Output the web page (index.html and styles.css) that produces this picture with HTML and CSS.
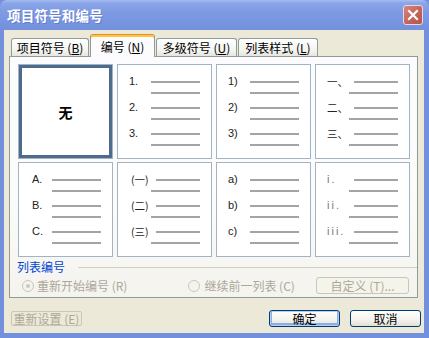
FILE: index.html
```html
<!DOCTYPE html>
<html>
<head>
<meta charset="utf-8">
<link rel="stylesheet" href="styles.css">
</head>
<body>
<div class="window">
  <div class="titlebar">
    <span class="title">项目符号和编号</span>
    <span class="close"><svg width="12" height="12" viewBox="0 0 12 12"><path d="M2 2 L10 10 M10 2 L2 10" stroke="#fff" stroke-width="2.2" stroke-linecap="square" fill="none"/></svg></span>
  </div>
  <div class="client">
    <div class="tabs">
      <div class="tab t1">项目符号 (<u>B</u>)</div>
      <div class="tab active">编号 (<u>N</u>)</div>
      <div class="tab t3">多级符号 (<u>U</u>)</div>
      <div class="tab t4">列表样式 (<u>L</u>)</div>
    </div>
    <div class="panel">
      <div class="grid">
        <div class="cell selected none">无</div>
        <div class="cell">
          <div class="item"><div class="r1"><span class="lbl">1.</span><span class="ln"></span></div><span class="ln"></span></div>
          <div class="item"><div class="r1"><span class="lbl">2.</span><span class="ln"></span></div><span class="ln"></span></div>
          <div class="item"><div class="r1"><span class="lbl">3.</span><span class="ln"></span></div><span class="ln"></span></div>
        </div>
        <div class="cell">
          <div class="item"><div class="r1"><span class="lbl">1)</span><span class="ln"></span></div><span class="ln"></span></div>
          <div class="item"><div class="r1"><span class="lbl">2)</span><span class="ln"></span></div><span class="ln"></span></div>
          <div class="item"><div class="r1"><span class="lbl">3)</span><span class="ln"></span></div><span class="ln"></span></div>
        </div>
        <div class="cell wide">
          <div class="item"><div class="r1"><span class="lbl cjk">一、</span><span class="ln"></span></div><span class="ln"></span></div>
          <div class="item"><div class="r1"><span class="lbl cjk">二、</span><span class="ln"></span></div><span class="ln"></span></div>
          <div class="item"><div class="r1"><span class="lbl cjk">三、</span><span class="ln"></span></div><span class="ln"></span></div>
        </div>
        <div class="cell ind">
          <div class="item"><div class="r1"><span class="lbl">A.</span><span class="ln"></span></div><span class="ln"></span></div>
          <div class="item"><div class="r1"><span class="lbl">B.</span><span class="ln"></span></div><span class="ln"></span></div>
          <div class="item"><div class="r1"><span class="lbl">C.</span><span class="ln"></span></div><span class="ln"></span></div>
        </div>
        <div class="cell wide ind">
          <div class="item"><div class="r1"><span class="lbl cjk">(一)</span><span class="ln"></span></div><span class="ln"></span></div>
          <div class="item"><div class="r1"><span class="lbl cjk">(二)</span><span class="ln"></span></div><span class="ln"></span></div>
          <div class="item"><div class="r1"><span class="lbl cjk">(三)</span><span class="ln"></span></div><span class="ln"></span></div>
        </div>
        <div class="cell">
          <div class="item"><div class="r1"><span class="lbl">a)</span><span class="ln"></span></div><span class="ln"></span></div>
          <div class="item"><div class="r1"><span class="lbl">b)</span><span class="ln"></span></div><span class="ln"></span></div>
          <div class="item"><div class="r1"><span class="lbl">c)</span><span class="ln"></span></div><span class="ln"></span></div>
        </div>
        <div class="cell wide">
          <div class="item"><div class="r1"><span class="lbl roman">i.</span><span class="ln"></span></div><span class="ln"></span></div>
          <div class="item"><div class="r1"><span class="lbl roman">ii.</span><span class="ln"></span></div><span class="ln"></span></div>
          <div class="item"><div class="r1"><span class="lbl roman">iii.</span><span class="ln"></span></div><span class="ln"></span></div>
        </div>
      </div>
      <div class="section">
        <span class="section-label">列表编号</span>
        <span class="sep"></span>
      </div>
      <div class="options">
        <span class="radio checked"></span><span class="dis opt1">重新开始编号 (R)</span>
        <span class="radio r2"></span><span class="dis">继续前一列表 (C)</span>
        <span class="btn dis-btn custom">自定义 (T)...</span>
      </div>
    </div>
    <div class="footer">
      <span class="reset">重新设置 (E)</span>
      <span class="btn default">确定</span>
      <span class="btn cancel">取消</span>
    </div>
  </div>
</div>
</body>
</html>
```

FILE: styles.css
```css
* { box-sizing: border-box; }
html, body { margin: 0; padding: 0; background: #7590de; }
body {
  width: 429px; height: 338px; overflow: hidden;
  font-family: "Noto Sans CJK SC", "Liberation Sans", sans-serif;
  font-size: 12px;
}
.window {
  width: 429px; height: 338px;
  background: #7390dc;
  border-radius: 7px 7px 0 0;
  display: flex; flex-direction: column;
}
.titlebar {
  height: 30px;
  display: flex; align-items: center;
  padding-left: 7px;
  border-radius: 7px 7px 0 0;
  background: linear-gradient(#a7bdf0 0px, #8aa5e8 3px, #7e9ae3 12px, #7592de 26px, #7390dc 30px);
}
.title {
  color: #fff; font-weight: bold; font-size: 13.5px; line-height: 16px;
  letter-spacing: 0.2px;
  text-shadow: 1px 1px 0 rgba(60, 80, 160, 0.35);
}
.close {
  margin-left: auto; margin-right: 6px;
  width: 20px; height: 20px;
  border: 1px solid #e9d8de;
  border-radius: 3px;
  background: linear-gradient(135deg, #d9847c, #c2625a 60%, #b6544d);
  display: flex; align-items: center; justify-content: center;
}
.client {
  margin: 0 5px 0 4px;
  height: 303px;
  background: #ece9d8;
  padding-top: 4px;
}
.tabs {
  display: flex; align-items: flex-end;
  height: 22px;
  margin-left: 7px;
  position: relative; z-index: 1;
}
.tab {
  height: 18px;
  border: 1px solid #919b9c; border-bottom: none;
  border-radius: 3px 3px 0 0;
  background: linear-gradient(#ffffff, #f3f3ef 70%, #e6e5de);
  text-align: center;
  line-height: 17px;
  color: #000;
  white-space: nowrap;
}
.tab u { text-decoration: underline; text-underline-offset: 1px; }
.t1 { width: 78px; }
.t3 { width: 81px; margin-left: 1px; }
.t4 { width: 80px; margin-left: 1px; }
.tab.active {
  width: 65px; height: 23px; margin-left: 1px; margin-bottom: -1px;
  background: #fcfcfe;
  border-top: 1px solid #e68b2c;
  box-shadow: inset 0 2px 0 #ffc73c;
  padding-top: 2px;
  line-height: 19px;
}
.panel {
  margin-left: 5px; margin-right: 6px;
  border: 1px solid #919b9c;
  background: linear-gradient(#fcfcfe, #fbfbf9 60%, #f4f3ee);
  padding: 7px 7px 3px 8px;
}
.grid {
  display: grid;
  grid-template-columns: repeat(4, 95px);
  grid-template-rows: 95px 95px;
  column-gap: 4px; row-gap: 3px;
}
.cell {
  background: #fff;
  border: 1px solid #a3b3c6;
  padding: 12px 11px 0 11px;
  display: flex; flex-direction: column;
}
.cell.ind { padding-left: 13px; }
.cell.selected {
  outline: 3px solid #4d6b8c;
  outline-offset: -4px;
}
.cell.none {
  padding: 0;
  align-items: center; justify-content: center;
  font-weight: bold; font-size: 14px; color: #000;
}
.item {
  display: flex; flex-direction: column;
  margin-bottom: 4px;
}
.r1 {
  display: flex; align-items: flex-start;
  height: 11px;
}
.lbl {
  font-family: "Liberation Sans", "Noto Sans CJK SC", sans-serif;
  font-size: 11px; line-height: 11px;
  color: #222;
  white-space: nowrap;
  margin-top: -1px;
}
.lbl.cjk { font-family: "Noto Sans CJK SC", sans-serif; font-size: 10.5px; }
.lbl.roman { color: #777; letter-spacing: 2px; }
.ln {
  display: block;
  height: 2px;
  width: 49px;
  margin-top: 4px;
  margin-left: auto;
  margin-bottom: 5px;
  background: #a4a4a4;
  flex: none;
}
.r1 .ln { margin-bottom: 0; }
.wide .r1 .ln { width: 44px; }
.item > .ln { align-self: flex-end; }
.section {
  display: flex; align-items: center;
  margin-top: 3px;
  height: 14px;
  margin-left: -1px; margin-right: -7px;
}
.section-label { color: #0046d5; line-height: 14px; }
.sep {
  flex: 1;
  margin-left: 13px;
  height: 1px;
  background: #d0d0bf;
  margin-top: 1px;
}
.options {
  display: flex; align-items: center;
  height: 17px;
  margin-top: 3px;
  margin-right: 1px;
}
.radio {
  width: 12px; height: 12px;
  border-radius: 50%;
  border: 1px solid #cac8bb;
  background: #f4f3ee;
  margin-left: 4px;
  margin-right: 3px;
  display: flex; align-items: center; justify-content: center;
}
.radio.checked::after {
  content: ""; width: 4px; height: 4px; border-radius: 50%;
  background: #cac8bb;
}
.radio.r2 { margin-left: 61px; margin-right: 4px; }
.dis { color: #aca899; white-space: nowrap; }
.btn {
  display: flex; align-items: center; justify-content: center;
  border-radius: 3px;
  white-space: nowrap;
}
.dis-btn.custom {
  margin-left: auto;
  width: 93px; height: 17px;
  border: 1px solid #c9c7ba;
  color: #aca899;
  background: #f5f4ea;
}
.footer {
  display: flex; align-items: center;
  margin-top: 12px;
  height: 17px;
  padding-left: 7px; padding-right: 3px;
}
.reset {
  width: 71px; height: 15px;
  border: 1px solid #c9c7ba;
  border-radius: 2px;
  color: #aca899;
  display: flex; align-items: center; justify-content: center;
  line-height: 13px;
  white-space: nowrap;
}
.footer .btn {
  width: 71px; height: 17px;
  border: 1px solid #003c74;
  background: linear-gradient(#ffffff, #f3f2ec 60%, #e3e0d5);
  color: #000;
}
.footer .default {
  margin-left: auto;
  box-shadow: inset 0 0 0 1px #b7d0f0, inset 0 -1px 0 2px #89ade4;
}
.footer .cancel { margin-left: 10px; }
```
